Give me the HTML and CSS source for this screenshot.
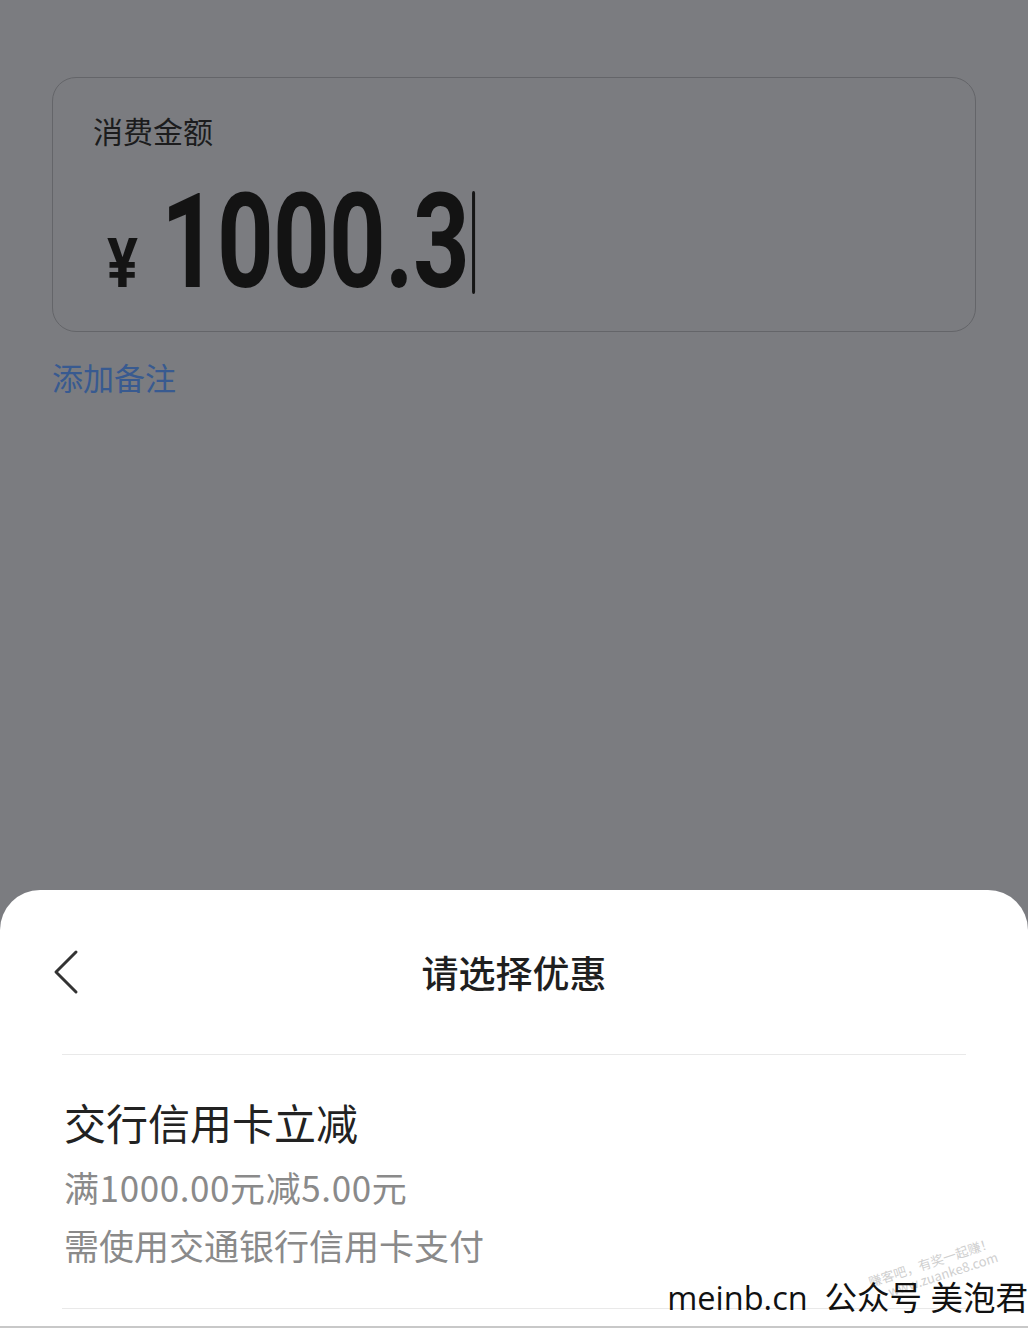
FILE: index.html
```html
<!DOCTYPE html>
<html lang="zh-CN">
<head>
    <meta charset="UTF-8">
    <meta name="viewport" content="width=device-width, initial-scale=1.0">
    <title>消费金额</title>
    <link rel="stylesheet" href="styles.css">
</head>
<body>

<div class="page">
    <div class="pay-area">
        <div class="amount-card">
            <div class="amount-label">消费金额</div>
            <div class="amount-row">
                <span class="currency">¥</span>
                <span class="amount-num">1000.3<span class="cursor"></span></span>
            </div>
        </div>
        <div class="add-note">添加备注</div>
    </div>

    <div class="sheet">
        <div class="sheet-header">
            <svg class="back" width="30" height="48" viewBox="0 0 30 48">
                <polyline points="24,4 4,24 24,44" fill="none" stroke="#333" stroke-width="3" stroke-linecap="round" stroke-linejoin="round"/>
            </svg>
            <div class="sheet-title">请选择优惠</div>
        </div>

        <div class="offer">
            <div class="offer-title">交行信用卡立减</div>
            <div class="offer-desc">满1000.00元减5.00元</div>
            <div class="offer-desc">需使用交通银行信用卡支付</div>
        </div>

        <!-- watermark on top of the screenshot -->
        <div class="stamp">
            <span>赚客吧，有奖一起赚！</span>
            <span>www.zuanke8.com</span>
        </div>
        <div class="mark">meinb.cn&nbsp; 公众号 美泡君</div>
    </div>
</div>

</body>
</html>
```

FILE: styles.css
```css
body {
    margin: 0;
    font-family: "Noto Sans CJK SC", "Noto Sans", sans-serif;
    background: #7b7c80;
}

.page {
    height: 1328px;
    display: flex;
    flex-direction: column;
    overflow: hidden;
}

.pay-area {
    padding: 77px 52px 0;
}

.amount-card {
    height: 255px;
    box-sizing: border-box;
    border: 1.5px solid #646569;
    border-radius: 24px;
    padding: 32px 40px 0;
}

.amount-label {
    font-size: 30px;
    line-height: 40px;
    color: #1c1c1d;
}

.amount-row {
    margin-top: 27px;
    display: flex;
    align-items: baseline;
    height: 131px;
}

.currency {
    font-family: Roboto, sans-serif;
    font-weight: 700;
    font-size: 68px;
    color: #141414;
    margin-left: 14px;
    margin-right: 18px;
    display: inline-block;
    transform: scaleX(0.85);
    transform-origin: left;
}

.amount-num {
    font-family: Roboto, sans-serif;
    font-weight: 700;
    font-size: 131px;
    line-height: 1;
    color: #131313;
    letter-spacing: -1px;
    display: inline-block;
    transform: scaleX(0.755);
    transform-origin: left;
}

.cursor {
    display: inline-block;
    width: 4px;
    height: 103px;
    background: #151515;
    margin-left: 4px;
    vertical-align: -7px;
    border-radius: 2px;
}

.add-note {
    margin-top: 24px;
    font-size: 31px;
    line-height: 42px;
    color: #385a90;
}

.sheet {
    position: relative;
    margin-top: auto;
    height: 438px;
    box-sizing: border-box;
    background: #fff;
    border-radius: 40px 40px 0 0;
    border-bottom: 2px solid #c8c8c8;
    padding: 0 62px;
}

.sheet-header {
    height: 164px;
    display: flex;
    align-items: center;
    justify-content: center;
    border-bottom: 1.5px solid #e9e9e9;
    position: relative;
}

.back {
    position: absolute;
    left: -10px;
    top: 58px;
}

.sheet-title {
    font-size: 37px;
    font-weight: 500;
    color: #1f1f1f;
}

.offer {
    padding: 39px 0 34px 2px;
    border-bottom: 1.5px solid #e9e9e9;
}

.offer-title {
    font-size: 42px;
    line-height: 56px;
    color: #222;
}

.offer-desc {
    font-size: 35px;
    line-height: 58px;
    color: #8a8a8a;
}

.offer-desc:nth-child(2) {
    letter-spacing: 0.6px;
}

.offer-title + .offer-desc {
    margin-top: 8px;
}

.mark {
    position: absolute;
    right: 0;
    bottom: 6px;
    font-family: "Open Sans", "Noto Sans CJK SC", sans-serif;
    font-size: 32.5px;
    color: #111;
    white-space: nowrap;
}

.stamp {
    position: absolute;
    right: 30px;
    bottom: 42px;
    display: flex;
    flex-direction: column;
    align-items: flex-end;
    font-size: 13px;
    line-height: 15px;
    color: #cfcfcf;
    transform: rotate(-18deg);
}
```
